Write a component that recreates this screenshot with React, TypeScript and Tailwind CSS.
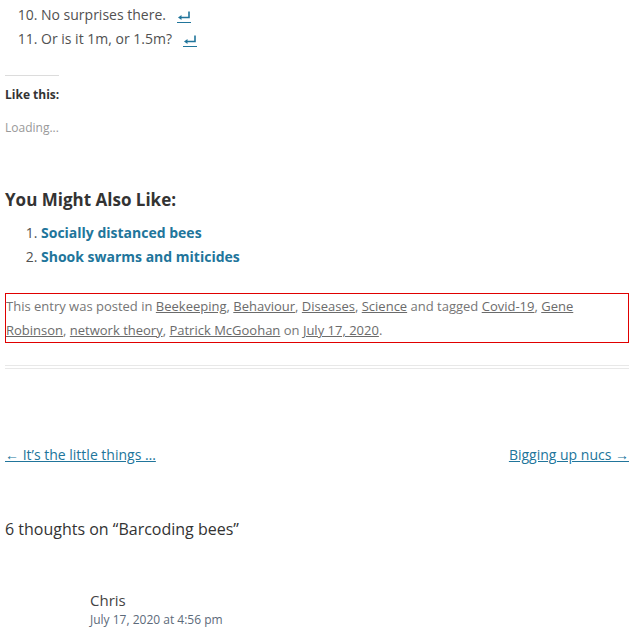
import React from "react";

const linkGray = "text-[#6b6b6b] underline";

function ReturnIcon() {
  return (
    <a className="ml-[11px] inline-block h-[12px] w-[14px] border-b border-[#21759b] align-[-3px]">
      <svg width="14" height="11" viewBox="0 0 14 11" className="block">
        <path d="M12 0.5 V6.5 H3" stroke="#21759b" strokeWidth="1.6" fill="none" />
        <path d="M1 6.5 L4.5 4 V9 Z" fill="#21759b" />
      </svg>
    </a>
  );
}

export default function App() {
  return (
    <div className="w-[634px] h-[634px] overflow-hidden bg-white px-[5px] font-['Open_Sans',sans-serif] text-[#4f4f4f]">
      <ol start={10} className="list-decimal pl-[36px] pt-[3px] text-[14px] leading-[24px] text-[#515151]">
        <li>
          No surprises there.
          <ReturnIcon />
        </li>
        <li>
          Or is it 1m, or 1.5m?
          <ReturnIcon />
        </li>
      </ol>

      <div className="mt-[24px] w-[54px] border-t border-[#dcdcdc]" />
      <h3 className="mt-[11px] text-[12px] font-bold leading-[16px] text-[#333]">Like this:</h3>
      <p className="mt-[17px] text-[12px] leading-[16px] text-[#999]">Loading...</p>

      <h3 className="mt-[51px] text-[17px] font-bold leading-[26px] text-[#333]">You Might Also Like:</h3>
      <ol className="list-decimal pl-[36px] mt-[8px] text-[14px] leading-[24px] text-[#515151]">
        <li>
          <a className="font-bold text-[#21759b]">Socially distanced bees</a>
        </li>
        <li>
          <a className="font-bold text-[#21759b]">Shook swarms and miticides</a>
        </li>
      </ol>

      <div className="mt-[24px] border border-[#e00000] text-[13px] leading-[24px] text-[#767676]">
        This entry was posted in <a className={linkGray}>Beekeeping</a>, <a className={linkGray}>Behaviour</a>,{" "}
        <a className={linkGray}>Diseases</a>, <a className={linkGray}>Science</a> and tagged{" "}
        <a className={linkGray}>Covid-19</a>, <a className={linkGray}>Gene Robinson</a>,{" "}
        <a className={linkGray}>network theory</a>, <a className={linkGray}>Patrick McGoohan</a> on{" "}
        <a className={linkGray}>July 17, 2020</a>.
      </div>

      <div className="mt-[22px] border-t border-b border-[#e8e8e8] h-[4px]" />

      <div className="mt-[74px] flex justify-between text-[14px] leading-[24px] text-[#21759b]">
        <a className="underline">
          <span className="font-['Liberation_Sans',sans-serif]">←</span> It’s the little things …
        </a>
        <a className="underline">
          Bigging up nucs <span className="font-['Liberation_Sans',sans-serif]">→</span>
        </a>
      </div>

      <h2 className="mt-[49px] text-[16px] leading-[26px] text-[#333]">6 thoughts on “Barcoding bees”</h2>

      <div className="mt-[47px] pl-[85px]">
        <div className="text-[15px] leading-[22px] text-[#444]">Chris</div>
        <div className="text-[12px] leading-[18px] text-[#5c6a7a]">July 17, 2020 at 4:56 pm</div>
      </div>
    </div>
  );
}
